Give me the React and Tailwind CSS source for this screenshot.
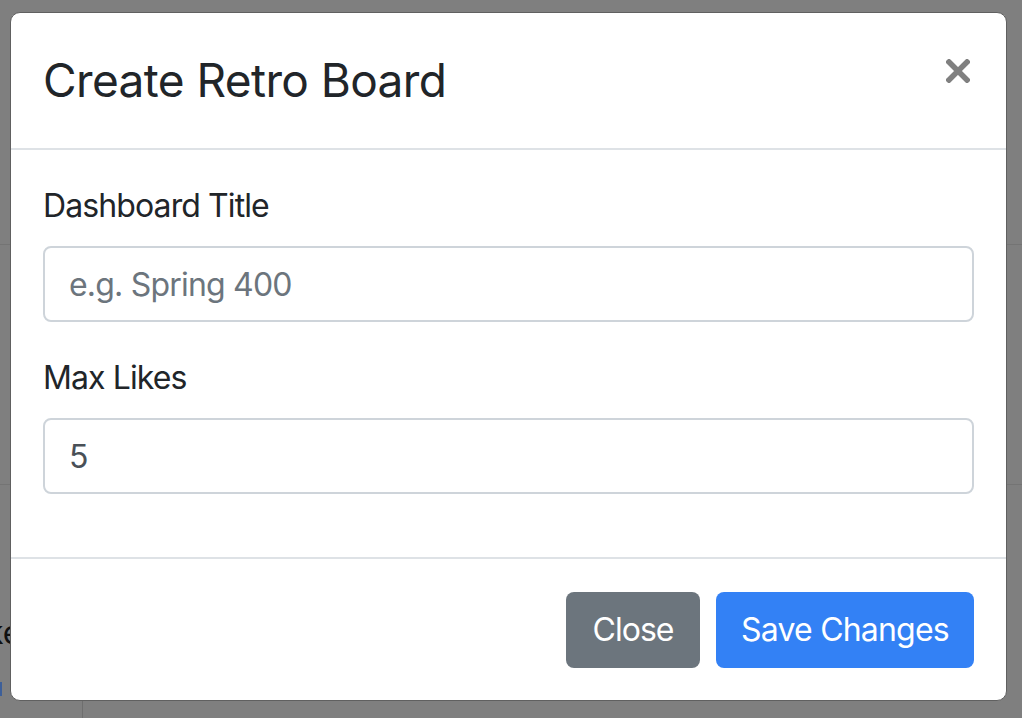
import { useState } from 'react'

const FONT = { fontFamily: 'Inter, "Noto Sans", "Liberation Sans", sans-serif' }

// ── Dimmed page behind the modal ──────────────────────────────────────────────
function Backdrop() {
  return (
    <div className="absolute inset-0 bg-[#7f7f7f]">
      <div className="h-[245px] border-b border-[#747474]" />
      <div className="h-[240px] border-b border-[#747474]" />
      <div className="pt-[132px] -ml-[14px] text-[32px] text-[#111] leading-none">ke</div>
      <div className="absolute left-[82px] top-[700px] bottom-0 border-l border-[#6e6e6e]" />
      <div className="absolute left-0 top-[682px] w-[2px] h-[14px] bg-[#3d5f99]" />
    </div>
  )
}

function Field({ label, children }) {
  return (
    <div className="mb-[32px]">
      <label className="block text-[32px] leading-[48px] tracking-[-0.9px] text-[#212529] mb-[16px]">{label}</label>
      {children}
    </div>
  )
}

export default function App() {
  const [title, setTitle] = useState('')
  const [likes, setLikes] = useState('5')

  return (
    <div className="relative w-[1022px] h-[718px] overflow-hidden" style={FONT}>
      <Backdrop />

      <div className="absolute left-[10px] top-[12px] w-[997px] h-[689px] bg-white border border-[#606060] rounded-[10px] flex flex-col">
        {/* header */}
        <div className="h-[137px] shrink-0 border-b-2 border-[#dee2e6] flex items-center justify-between pl-[32px] pr-[36px] pb-[2px]">
          <h5 className="text-[46px] leading-[56px] text-[#212529] font-normal tracking-[-0.6px]">Create Retro Board</h5>
          <button className="-mt-[18px] w-[24px] h-[24px]" aria-label="Close">
            <svg viewBox="0 0 24 24" width="24" height="24">
              <path d="M3 3 L21 21 M21 3 L3 21" stroke="#808080" strokeWidth="5.5" strokeLinecap="square" />
            </svg>
          </button>
        </div>

        {/* body */}
        <div className="flex-1 px-[32px] pt-[32px] border-b-2 border-[#dee2e6]">
          <Field label="Dashboard Title">
            <input
              value={title} onChange={(e) => setTitle(e.target.value)}
              placeholder="e.g. Spring 400"
              className="w-full h-[76px] border-2 border-[#ced4da] rounded-[8px] px-[24px] text-[32px] tracking-[-0.8px] text-[#495057] placeholder:text-[#6c757d] outline-none"
            />
          </Field>
          <Field label="Max Likes">
            <input
              value={likes} onChange={(e) => setLikes(e.target.value)}
              className="w-full h-[76px] border-2 border-[#ced4da] rounded-[8px] px-[24px] text-[32px] tracking-[-0.8px] text-[#495057] outline-none"
            />
          </Field>
        </div>

        {/* footer */}
        <div className="h-[141px] shrink-0 flex items-center justify-end gap-[16px] px-[32px]">
          <button className="h-[76px] w-[134px] rounded-[8px] bg-[#6c757d] text-white text-[32px] tracking-[-1px]">Close</button>
          <button className="h-[76px] w-[258px] rounded-[8px] bg-[#3381f5] text-white text-[32px] tracking-[-0.8px]">Save Changes</button>
        </div>
      </div>
    </div>
  )
}
